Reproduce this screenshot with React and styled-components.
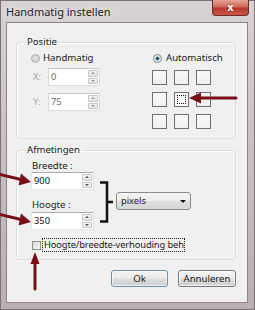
import React from "react";
import styled, { createGlobalStyle } from "styled-components";

const GlobalStyle = createGlobalStyle`
  html, body {
    margin: 0;
    padding: 0;
    background: #cfc8cc;
  }
  body {
    font-family: "Noto Sans", "Open Sans", sans-serif;
    font-size: 9.3px;
    color: #1a1a1a;
  }
`;

const Window = styled.div`
  position: relative;
  width: 255px;
  height: 310px;
  display: flex;
  flex-direction: column;
  box-sizing: border-box;
  background: linear-gradient(180deg, #d9d3d6 0%, #cbc3c8 40%, #b9afb5 100%);
  box-shadow: inset 0 0 0 1px #7c7177;
  overflow: hidden;
`;

const TitleBar = styled.div`
  height: 22px;
  flex: none;
  display: flex;
  align-items: flex-start;
  justify-content: space-between;
  padding-left: 6px;
`;

const Title = styled.span`
  font-size: 11px;
  line-height: 23px;
  color: #222;
  text-shadow: 0 0 6px rgba(255, 255, 255, 0.9);
`;

const CloseButton = styled.div`
  width: 37px;
  height: 16px;
  margin-right: 6px;
  box-sizing: border-box;
  border: 1px solid #6e2a26;
  border-top: none;
  border-radius: 0 0 4px 4px;
  background: linear-gradient(180deg, #e3a598 0%, #d0685a 45%, #b8382c 55%, #c9584a 100%);
  display: flex;
  align-items: center;
  justify-content: center;
  color: #fff;
  font-family: "DejaVu Sans", sans-serif;
  font-weight: bold;
  font-size: 10px;
  text-shadow: 0 0 2px #5b1610;
`;

const Client = styled.div`
  flex: 1;
  margin: 0 7px 7px 6px;
  box-sizing: border-box;
  border: 1px solid #8d8389;
  background: #f0f0f0;
  padding: 13px 11px 0 9px;
  display: flex;
  flex-direction: column;
`;

const GroupBox = styled.fieldset`
  margin: ${(p) => (p.$first ? "0" : "5px 0 0")};
  padding: 0;
  min-width: 0;
  border: 1px solid #d5dfe5;
  border-radius: 3px;
  box-shadow: inset 1px 1px 0 #fff;
`;

const Legend = styled.legend`
  margin-left: 8px;
  padding: 0 2px;
  font-size: 9.6px;
  line-height: 12px;
  color: #1a1a1a;
`;

const PositieBody = styled.div`
  display: grid;
  grid-template-columns: 121px 1fr;
  padding: 4px 0 9px 14px;
`;

const Column = styled.div`
  display: flex;
  flex-direction: column;
  align-items: flex-start;
`;

const OptionRow = styled.label`
  display: flex;
  align-items: center;
  height: 12px;
  padding-left: ${(p) => p.$indent || 0}px;
  gap: ${(p) => p.$gap || 3}px;
  line-height: 12px;
  font-size: 9.6px;
`;

const Radio = styled.span`
  width: 9px;
  height: 9px;
  box-sizing: border-box;
  border-radius: 50%;
  border: 1px solid ${(p) => (p.$checked ? "#7f8a94" : "#a9a9a9")};
  background: ${(p) =>
    p.$checked
      ? "radial-gradient(circle, #1f4f68 0%, #3d6f86 35%, #dfe6ea 45%, #f4f4f4 100%)"
      : "radial-gradient(circle at 40% 40%, #e4e4e4 0%, #cfcfcf 60%, #e8e8e8 100%)"};
`;

const FieldRow = styled.div`
  display: flex;
  align-items: center;
  margin-top: ${(p) => p.$top}px;
`;

const FieldLabel = styled.span`
  width: 15px;
  padding-left: 2px;
  color: #a4a4a4;
  line-height: 18px;
`;

const InputBox = styled.div`
  width: ${(p) => p.$w}px;
  height: 18px;
  box-sizing: border-box;
  display: flex;
  align-items: stretch;
  border: 1px solid ${(p) => (p.$disabled ? "#c5c8ce" : "#abadb3")};
  border-bottom-color: ${(p) => (p.$disabled ? "#d9dde2" : "#e3e9ef")};
  border-left-color: ${(p) => (p.$disabled ? "#d6d8dd" : "#e2e3ea")};
  border-right-color: ${(p) => (p.$disabled ? "#d6d8dd" : "#dbdfe6")};
  background: #fff;
`;

const InputValue = styled.span`
  flex: 1;
  padding-left: 2px;
  line-height: 16px;
  color: ${(p) => (p.$disabled ? "#6d6d6d" : "#111")};
`;

const Spinner = styled.div`
  width: 10px;
  margin: 1px;
  display: flex;
  flex-direction: column;
  gap: 1px;
`;

const SpinHalf = styled.div`
  flex: 1;
  box-sizing: border-box;
  border: 1px solid #c3c6cb;
  border-radius: 1px;
  background: linear-gradient(180deg, #f6f6f6, #e4e4e4);
  display: flex;
  align-items: center;
  justify-content: center;
  &::after {
    content: "";
    border-left: 2px solid transparent;
    border-right: 2px solid transparent;
    ${(p) => (p.$up ? "border-bottom" : "border-top")}: 2px solid
      ${(p) => (p.$disabled ? "#9a9a9a" : "#4d4d4d")};
  }
`;

const SpotGrid = styled.div`
  margin-top: 6px;
  display: grid;
  grid-template-columns: repeat(3, 15px);
  grid-auto-rows: 15px;
  gap: 7px;
`;

const Spot = styled.div`
  box-sizing: border-box;
  border: 1px solid #6f6f6f;
  background: ${(p) => (p.$active ? "#fbfbfb" : "linear-gradient(180deg, #fafafa, #efefef)")};
  padding: 2px;
  &::after {
    content: "";
    display: ${(p) => (p.$active ? "block" : "none")};
    height: 100%;
    box-sizing: border-box;
    border: 1px dotted #111;
  }
`;

const MaatBody = styled.div`
  display: flex;
  flex-direction: column;
  padding: 4px 0 7px 14px;
`;

const MaatRow = styled.div`
  display: flex;
  align-items: flex-end;
`;

const TextLabel = styled.span`
  line-height: 12px;
  padding-left: 1px;
  font-size: 9.6px;
  margin-top: ${(p) => p.$top || 0}px;
  margin-bottom: ${(p) => p.$bottom || 0}px;
`;

const BracketSvg = styled.svg`
  margin: 0 0 7px 4px;
  flex: none;
`;

const Select = styled.div`
  width: 75px;
  height: 18px;
  margin: 0 0 20px 2px;
  box-sizing: border-box;
  border: 1px solid #8a8a8a;
  border-radius: 3px;
  background: linear-gradient(180deg, #f5f5f5 0%, #ececec 50%, #dedede 51%, #d6d6d6 100%);
  display: flex;
  align-items: center;
  justify-content: space-between;
  padding: 0 4px 0 4px;
  line-height: 16px;
  &::after {
    content: "";
    border-left: 3px solid transparent;
    border-right: 3px solid transparent;
    border-top: 3px solid #111;
  }
`;

const CheckRow = styled.div`
  display: flex;
  align-items: center;
  height: 14px;
  margin-top: 8px;
  padding-left: 1px;
  gap: 1px;
`;

const CheckBox = styled.span`
  width: 9px;
  height: 9px;
  flex: none;
  box-sizing: border-box;
  border: 1px solid #8e8f8f;
  background: linear-gradient(135deg, #dcdcdc, #f4f4f4);
`;

const CheckLabel = styled.span`
  width: 143px;
  height: 14px;
  box-sizing: border-box;
  border: 1px dotted #222;
  padding-left: 1px;
  line-height: 12px;
  font-size: 9.3px;
  letter-spacing: -0.1px;
  white-space: nowrap;
  overflow: hidden;
`;

const ButtonRow = styled.div`
  display: flex;
  justify-content: flex-end;
  gap: 10px;
  margin-top: 10px;
`;

const Button = styled.div`
  width: ${(p) => p.$w}px;
  height: 17px;
  flex: none;
  box-sizing: border-box;
  border: 1px solid ${(p) => (p.$default ? "#6a8fae" : "#7a7a7a")};
  border-radius: 3px;
  background: linear-gradient(180deg, #f3f3f3 0%, #ebebeb 48%, #dddddd 52%, #cfcfcf 100%);
  box-shadow: inset 0 0 0 1px rgba(255, 255, 255, 0.7);
  display: flex;
  align-items: center;
  justify-content: center;
  line-height: 15px;
  font-size: 9.6px;
`;

const Annotations = styled.svg`
  position: absolute;
  left: 0;
  top: 0;
  pointer-events: none;
`;

const NumberInput = ({ value, width, disabled }) => (
  <InputBox $w={width} $disabled={disabled}>
    <InputValue $disabled={disabled}>{value}</InputValue>
    <Spinner>
      <SpinHalf $up $disabled={disabled} />
      <SpinHalf $disabled={disabled} />
    </Spinner>
  </InputBox>
);

const ARROW = "#7b0d19";

const App = () => (
  <>
    <GlobalStyle />
    <Window>
      <TitleBar>
        <Title>Handmatig instellen</Title>
        <CloseButton>x</CloseButton>
      </TitleBar>
      <Client>
        <GroupBox $first>
          <Legend>Positie</Legend>
          <PositieBody>
            <Column>
              <OptionRow>
                <Radio />
                Handmatig
              </OptionRow>
              <FieldRow $top={4}>
                <FieldLabel>X:</FieldLabel>
                <NumberInput value="0" width={52} disabled />
              </FieldRow>
              <FieldRow $top={7}>
                <FieldLabel>Y:</FieldLabel>
                <NumberInput value="75" width={52} disabled />
              </FieldRow>
            </Column>
            <Column>
              <OptionRow $indent={1} $gap={4}>
                <Radio $checked />
                Automatisch
              </OptionRow>
              <SpotGrid>
                {[0, 1, 2, 3, 4, 5, 6, 7, 8].map((i) => (
                  <Spot key={i} $active={i === 4} />
                ))}
              </SpotGrid>
            </Column>
          </PositieBody>
        </GroupBox>

        <GroupBox>
          <Legend>Afmetingen</Legend>
          <MaatBody>
            <MaatRow>
              <Column>
                <TextLabel>Breedte :</TextLabel>
                <NumberInput value="900" width={63} />
                <TextLabel $top={9} $bottom={1}>Hoogte :</TextLabel>
                <NumberInput value="350" width={63} />
              </Column>
              <BracketSvg width="16" height="42" viewBox="0 0 16 42">
                <path
                  d="M2 1.5 H9 V40.5 H2 M9 21 H15"
                  fill="none"
                  stroke="#111"
                  strokeWidth="2.5"
                />
              </BracketSvg>
              <Select>pixels</Select>
            </MaatRow>
            <CheckRow>
              <CheckBox />
              <CheckLabel>Hoogte/breedte-verhouding beh</CheckLabel>
            </CheckRow>
          </MaatBody>
        </GroupBox>

        <ButtonRow>
          <Button $w={57} $default>
            Ok
          </Button>
          <Button $w={58}>Annuleren</Button>
        </ButtonRow>
      </Client>

      <Annotations width="255" height="310" viewBox="0 0 255 310">
        <g stroke={ARROW} strokeWidth="3" strokeLinecap="round" fill="none">
          <path d="M-2 174 L21 179.5" />
          <path d="M-2 214 L21 219.5" />
          <path d="M35 289 L35 262" />
          <path d="M236 98 L200 98" />
        </g>
        <g fill={ARROW}>
          <path d="M31 182 L18.5 185.5 L21 173.5 Z" />
          <path d="M31 222 L18.5 225.5 L21 213.5 Z" />
          <path d="M35 252 L30.5 264 L39.5 264 Z" />
          <path d="M189 98 L201 92.5 L201 103.5 Z" />
        </g>
      </Annotations>
    </Window>
  </>
);

export default App;
